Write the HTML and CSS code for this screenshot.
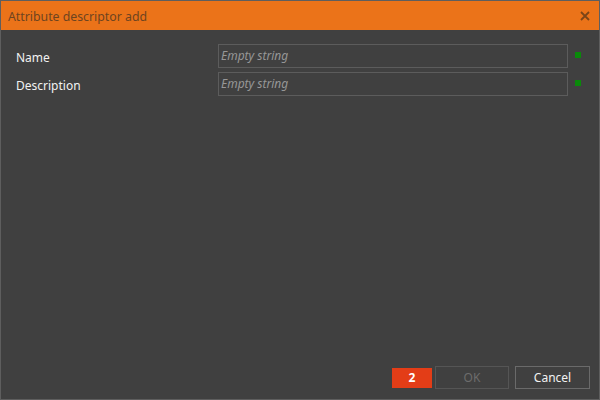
FILE: index.html
```html
<!DOCTYPE html>
<html lang="en">
<head>
    <meta charset="UTF-8">
    <title>Attribute descriptor add</title>
    <link rel="stylesheet" href="styles.css">
</head>
<body>
    <div class="window">
        <div class="titlebar">
            <span class="title">Attribute descriptor add</span>
            <span class="close">
                <svg width="10" height="10" viewBox="0 0 10 10">
                    <path d="M1 1 L9 9 M9 1 L1 9" stroke="#7a4518" stroke-width="1.8"/>
                </svg>
            </span>
        </div>
        <div class="content">
            <div class="form">
                <div class="row">
                    <label>Name</label>
                    <div class="field">Empty string</div>
                    <span class="status"></span>
                </div>
                <div class="row">
                    <label>Description</label>
                    <div class="field">Empty string</div>
                    <span class="status"></span>
                </div>
            </div>
            <div class="footer">
                <div class="counter">2</div>
                <button class="btn ok" disabled>OK</button>
                <button class="btn cancel">Cancel</button>
            </div>
        </div>
    </div>
</body>
</html>
```

FILE: styles.css
```css
html, body {
    margin: 0;
    padding: 0;
    height: 100%;
}
body {
    font-family: "Noto Sans", "Open Sans", sans-serif;
    font-size: 12px;
    background: #404040;
}
.window {
    box-sizing: border-box;
    width: 600px;
    height: 400px;
    border: 1px solid #5e5e5e;
    display: flex;
    flex-direction: column;
    background: #404040;
}
.titlebar {
    height: 29px;
    background: #eb7319;
    display: flex;
    align-items: center;
    justify-content: space-between;
    padding: 0 8px 0 7px;
    flex-shrink: 0;
}
.title {
    color: #6e4420;
    font-size: 12.3px;
    padding-top: 1px;
}
.close {
    display: flex;
    width: 10px;
    height: 10px;
    margin-right: 1px;
}
.content {
    flex: 1;
    display: flex;
    flex-direction: column;
    justify-content: space-between;
    padding: 14px 9px 10px 15px;
}
.form {
    display: flex;
    flex-direction: column;
    gap: 4px;
}
.row {
    display: flex;
    align-items: center;
    height: 24px;
}
.row label {
    width: 202px;
    color: #f2f2f2;
    padding-top: 3px;
}
.field {
    box-sizing: border-box;
    width: 350px;
    height: 24px;
    border: 1px solid #5c5c5c;
    color: #979797;
    font-style: italic;
    line-height: 22px;
    padding-left: 2px;
}
.status {
    width: 6px;
    height: 6px;
    background: #0a8a0a;
    margin-left: 7px;
    margin-top: -3px;
}
.footer {
    display: flex;
    justify-content: flex-end;
    align-items: center;
    gap: 5px;
}
.counter {
    width: 40px;
    height: 20px;
    margin-right: -2px;
    background: #e33d17;
    color: #fff;
    font-weight: bold;
    text-align: center;
    line-height: 20px;
}
.btn {
    box-sizing: border-box;
    width: 75px;
    height: 23px;
    background: transparent;
    border: 1px solid #555555;
    color: #6c6c6c;
    font-family: inherit;
    font-size: 12px;
    padding: 0;
}
.ok {
    width: 74px;
}
.cancel {
    margin-left: 1px;
    border-color: #6a6a6a;
    color: #f2f2f2;
}
```
